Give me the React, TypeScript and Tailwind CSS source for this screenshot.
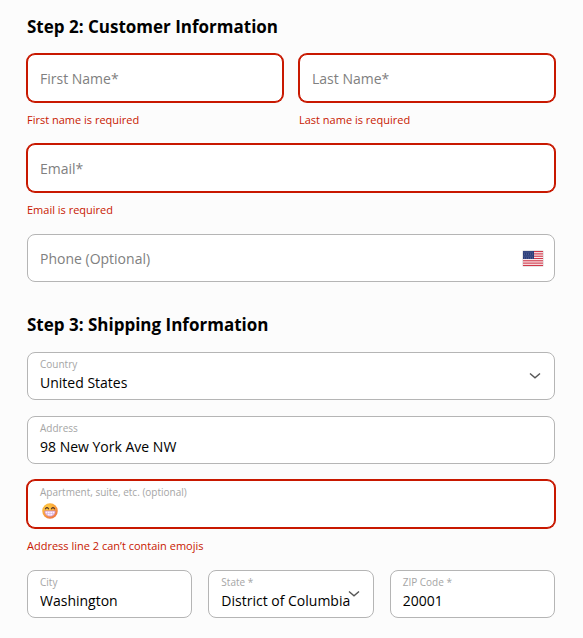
import { useId, useState, type ReactNode } from 'react'
import clsx from 'clsx'

type FieldProps = {
  label: string
  initial?: string
  error?: string
  type?: string
  options?: string[]
  hideText?: boolean
  children?: ReactNode
}

function Field({ label, initial = '', error, type = 'text', options, hideText, children }: FieldProps) {
  const id = useId()
  const [value, setValue] = useState(initial)
  const filled = value !== ''

  return (
    <div className="min-w-0">
      <div
        className={clsx(
          'relative flex h-12 flex-col justify-center rounded-lg border bg-white px-3',
          error ? 'border-[#c81800] ring-1 ring-[#c81800]' : 'border-[#b5b5b5]'
        )}
      >
        {/* the label rests over the empty input and moves above the text once filled */}
        <label
          htmlFor={id}
          className={clsx(
            filled
              ? 'py-px text-[10px] leading-3 text-[#a5a5a5]'
              : 'pointer-events-none absolute inset-x-3 top-3 text-sm leading-6 text-[#808080]'
          )}
        >
          {label}
        </label>
        {options ? (
          <select
            id={id}
            value={value}
            onChange={(e) => setValue(e.target.value)}
            className="w-full appearance-none bg-transparent text-sm leading-6 text-black outline-none"
          >
            {options.map((o) => (
              <option key={o}>{o}</option>
            ))}
          </select>
        ) : (
          <input
            id={id}
            type={type}
            value={value}
            onChange={(e) => setValue(e.target.value)}
            aria-invalid={!!error}
            className={clsx(
              'w-full bg-transparent text-sm leading-6 outline-none',
              hideText && value === initial ? 'text-transparent' : 'text-black'
            )}
          />
        )}
        {options && (
          <svg
            viewBox="0 0 12 8"
            className="pointer-events-none absolute top-[19px] right-[13px] h-2 w-3 fill-none stroke-[#555555]"
            strokeWidth="1.4"
          >
            <path d="M1 1.5 6 5.8l5-4.3" />
          </svg>
        )}
        {hideText && value !== initial ? null : children}
      </div>
      {error && <p className="pt-2.5 text-[11px] leading-4 text-[#c81800]">{error}</p>}
    </div>
  )
}

function UsFlag() {
  return (
    <svg viewBox="0 0 22 17" className="absolute top-[15px] right-[10px] h-[17px] w-[22px]">
      <rect width="22" height="17" rx="2" fill="#e6e6e6" />
      <rect x="1" y="1" width="20" height="15" fill="#fff" />
      {[0, 1, 2, 3, 4, 5, 6].map((i) => (
        <rect key={i} x="1" y={1 + i * 2.3} width="20" height="1.2" fill="#d0384a" />
      ))}
      <rect x="1" y="1" width="11" height="8" fill="#2b3c78" />
      {[2, 4, 6, 8].map((y) =>
        [2, 4, 6, 8, 10].map((x) => (
          <circle key={`${x}-${y}`} cx={x + (y % 4 ? 0 : 0.7)} cy={y} r="0.4" fill="#a9b3d3" />
        ))
      )}
    </svg>
  )
}

function GrinEmoji() {
  return (
    <svg viewBox="0 0 32 32" className="pointer-events-none absolute top-[22px] left-[14px] size-4">
      <defs>
        <radialGradient id="grin" cx="0.35" cy="0.3" r="0.8">
          <stop offset="0" stopColor="#ffcf45" />
          <stop offset="0.55" stopColor="#fba73a" />
          <stop offset="1" stopColor="#ec6a45" />
        </radialGradient>
      </defs>
      <circle cx="16" cy="16" r="15.5" fill="url(#grin)" />
      <path d="M7 11.5q3-4.5 6 0M19 11.5q3-4.5 6 0" fill="none" stroke="#56352b" strokeWidth="2.6" strokeLinecap="round" />
      <path d="M5.5 16h21c0 7-4.5 10.5-10.5 10.5S5.5 23 5.5 16Z" fill="#fdf6ff" stroke="#c069ad" strokeWidth="1.4" />
      <path d="M7 21h18M11 17v8M16 17v9M21 17v8" stroke="#d9abdc" strokeWidth="1.2" />
    </svg>
  )
}

export default function App() {
  return (
    <form
      className="min-h-screen bg-[#fcfcfc] pt-3 pr-7 pb-5 pl-[27px] font-['Open_Sans',sans-serif]"
      noValidate
    >
      <section>
        <h2 className="text-[17px] leading-[30px] font-bold text-black">Step 2: Customer Information</h2>
        <div className="mt-3 grid gap-4">
          <div className="grid grid-cols-2 gap-4">
            <Field label="First Name*" error="First name is required" />
            <Field label="Last Name*" error="Last name is required" />
          </div>
          <Field label="Email*" type="email" error="Email is required" />
          <Field label="Phone (Optional)" type="tel">
            <UsFlag />
          </Field>
        </div>
      </section>

      <section className="mt-7">
        <h2 className="text-[17px] leading-[30px] font-bold text-black">Step 3: Shipping Information</h2>
        <div className="mt-3 grid gap-4">
          <Field label="Country" initial="United States" options={['United States', 'Canada']} />
          <Field label="Address" initial="98 New York Ave NW" />
          <Field
            label="Apartment, suite, etc. (optional)"
            initial="😁"
            error="Address line 2 can’t contain emojis"
            hideText
          >
            <GrinEmoji />
          </Field>
          <div className="grid grid-cols-3 gap-4">
            <Field label="City" initial="Washington" />
            <Field
              label="State *"
              initial="District of Columbia"
              options={['District of Columbia', 'Maryland', 'Virginia']}
            />
            <Field label="ZIP Code *" initial="20001" />
          </div>
        </div>
      </section>
    </form>
  )
}
